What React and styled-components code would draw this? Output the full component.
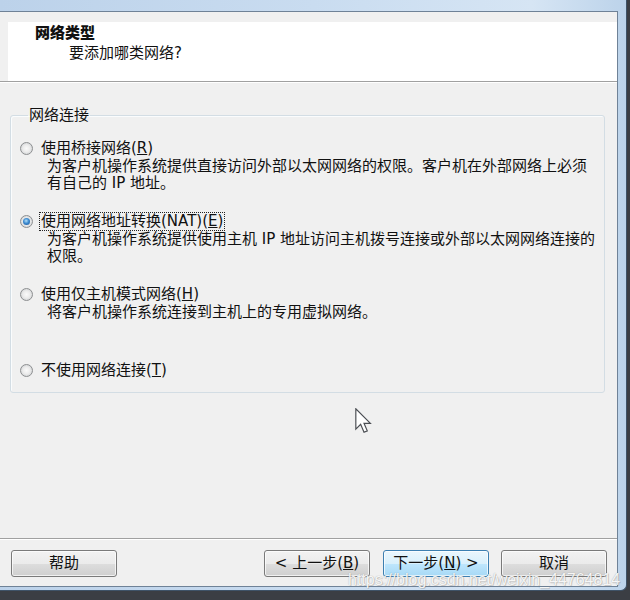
import React from "react";
import styled, { createGlobalStyle } from "styled-components";

const Global = createGlobalStyle`
  html, body { margin: 0; padding: 0; }
  body {
    background: #3b3e44;
    font-family: "DejaVu Sans", "Noto Sans CJK SC", sans-serif;
  }
`;

const Page = styled.div`
  width: 630px;
  height: 600px;
  background: #3b3e44;
  overflow: hidden;
  position: relative;
`;

const Frame = styled.div`
  position: relative;
  width: 627px;
  box-sizing: border-box;
  padding: 11px 8px 3px 0;
  background: linear-gradient(90deg, #bcd2ea 0%, #c9dcf0 50%, #d6e5f4 85%, #bcd3ea 100%);
  border-right: 1px solid #3f5368;
  border-bottom: 1px solid #3f5368;
  border-bottom-right-radius: 6px;
`;

const Client = styled.div`
  height: 574px;
  background: #f0f0f0;
  border-top: 1px solid #6f8297;
  border-right: 1px solid #6f8297;
  border-bottom: 1px solid #6f8297;
  display: flex;
  flex-direction: column;
  font-size: 15px;
  color: #111;
`;

const HeaderBand = styled.div`
  padding: 10px 0 0 8px;
`;

const HeaderPanel = styled.div`
  height: 59px;
  box-sizing: border-box;
  background: #fff;
  padding: 1px 0 0 27px;
  line-height: 17px;
`;

const HeaderTitle = styled.div`
  font-weight: 900;
  font-family: "Noto Sans CJK SC", sans-serif;
`;

const HeaderSub = styled.div`
  margin: 5px 0 0 34px;
`;

const Separator = styled.div`
  height: 0;
  border-top: 1px solid #a0a0a0;
  border-bottom: 1px solid #ffffff;
`;

const Main = styled.div`
  flex: 1;
  padding: 23px 12px 0 10px;
`;

const Group = styled.fieldset`
  margin: 0;
  padding: 15px 9px 13px 9px;
  border: 1px solid #d3dde4;
  border-radius: 3px;
  box-shadow: inset 1px 1px 0 #fafcfd;
  display: flex;
  flex-direction: column;
  gap: 20px;
`;

const Legend = styled.legend`
  margin-left: 8px;
  padding: 0 1px;
  line-height: 18px;
`;

const Option = styled.div`
  display: flex;
  flex-direction: column;
  margin-top: ${(p) => (p.$last ? "3px" : "0")};
`;

const OptionLine = styled.div`
  display: flex;
  align-items: center;
  height: 18px;
  gap: 7px;
`;

const RadioCircle = styled.span`
  flex: none;
  width: 13px;
  height: 13px;
  box-sizing: border-box;
  border-radius: 50%;
  border: 1px solid #8d8f91;
  background: radial-gradient(circle at 50% 50%, #fafafa 0%, #ececec 45%, #d2d4d6 80%, #e6e6e6 100%);
  display: flex;
  align-items: center;
  justify-content: center;
  &::after {
    content: "";
    width: 7px;
    height: 7px;
    border-radius: 50%;
    background: ${(p) =>
      p.$checked
        ? "radial-gradient(circle at 45% 40%, #b4e0fa 0%, #3d8bd0 45%, #1b4f92 100%)"
        : "transparent"};
  }
`;

const OptionLabel = styled.span`
  line-height: 17px;
  padding: 0 1px;
  margin-left: -1px;
  border: 1px dotted ${(p) => (p.$focused ? "#222" : "transparent")};
`;

const Desc = styled.div`
  margin: 1px 0 0 27px;
  line-height: 17px;
  min-height: ${(p) => (p.$lines ? `${p.$lines * 17}px` : "0")};
`;

const ButtonBar = styled.div`
  display: flex;
  align-items: center;
  padding: 10px 10px 9px 11px;
`;

const Spacer = styled.div`
  flex: 1;
`;

const Button = styled.button`
  width: 106px;
  height: 27px;
  box-sizing: border-box;
  margin-left: ${(p) => p.$gap || 0}px;
  border-radius: 3px;
  border: 1px solid ${(p) => (p.$default ? "#3c7fb1" : "#7a7a7a")};
  background: ${(p) =>
    p.$default
      ? "linear-gradient(#eaf6fd 0%, #d9f0fc 50%, #bee6fd 51%, #a7d9f5 100%)"
      : "linear-gradient(#f2f2f2 0%, #ebebeb 50%, #dddddd 51%, #cfcfcf 100%)"};
  box-shadow: inset 0 0 0 1px rgba(255, 255, 255, 0.7);
  font-family: "DejaVu Sans", "Noto Sans CJK SC", sans-serif;
  font-size: 15px;
  color: #111;
  padding: 0;
  line-height: 17px;
`;

const Cursor = styled.svg`
  position: absolute;
  left: 355px;
  top: 408px;
`;

const Watermark = styled.div`
  position: absolute;
  left: 348px;
  top: 571px;
  font-family: "Liberation Sans", sans-serif;
  font-size: 16px;
  color: rgba(255, 255, 255, 0.92);
  text-shadow: 0 0 1px rgba(90, 90, 90, 0.55), 1px 1px 0 rgba(120, 120, 120, 0.25);
  white-space: nowrap;
  pointer-events: none;
`;

const options = [
  {
    label: ["使用桥接网络(", "R", ")"],
    desc: ["为客户机操作系统提供直接访问外部以太网网络的权限。客户机在外部网络上必须", "有自己的 IP 地址。"],
    lines: 2,
  },
  {
    label: ["使用网络地址转换(NAT)(", "E", ")"],
    desc: ["为客户机操作系统提供使用主机 IP 地址访问主机拨号连接或外部以太网网络连接的", "权限。"],
    lines: 2,
    checked: true,
  },
  {
    label: ["使用仅主机模式网络(", "H", ")"],
    desc: ["将客户机操作系统连接到主机上的专用虚拟网络。"],
    lines: 2,
  },
  {
    label: ["不使用网络连接(", "T", ")"],
    desc: [],
    lines: 0,
    last: true,
  },
];

export default function App() {
  return (
    <Page>
      <Global />
      <Frame>
        <Client>
          <HeaderBand>
            <HeaderPanel>
              <HeaderTitle>网络类型</HeaderTitle>
              <HeaderSub>要添加哪类网络?</HeaderSub>
            </HeaderPanel>
          </HeaderBand>
          <Separator />
          <Main>
            <Group>
              <Legend>网络连接</Legend>
              {options.map((o, i) => (
                <Option key={i} $last={o.last}>
                  <OptionLine>
                    <RadioCircle $checked={o.checked} />
                    <OptionLabel $focused={o.checked}>
                      {o.label[0]}
                      <u>{o.label[1]}</u>
                      {o.label[2]}
                    </OptionLabel>
                  </OptionLine>
                  {o.lines > 0 && (
                    <Desc $lines={o.lines}>
                      {o.desc.map((d, j) => (
                        <div key={j}>{d}</div>
                      ))}
                    </Desc>
                  )}
                </Option>
              ))}
            </Group>
          </Main>
          <Separator />
          <ButtonBar>
            <Button>帮助</Button>
            <Spacer />
            <Button>
              &lt; 上一步(<u>B</u>)
            </Button>
            <Button $default $gap={13}>
              下一步(<u>N</u>) &gt;
            </Button>
            <Button $gap={12}>取消</Button>
          </ButtonBar>
        </Client>
        <Cursor width="17" height="26" viewBox="0 0 13 20">
          <path
            d="M0.6 0.6 V16.2 L4.3 12.6 L6.9 18.6 L9.4 17.6 L6.9 11.8 H11.8 Z"
            fill="#ffffff"
            stroke="#4a4d52"
            strokeWidth="0.9"
            strokeLinejoin="miter"
          />
        </Cursor>
        <Watermark>https://blog.csdn.net/weixin_44764814</Watermark>
      </Frame>
    </Page>
  );
}
